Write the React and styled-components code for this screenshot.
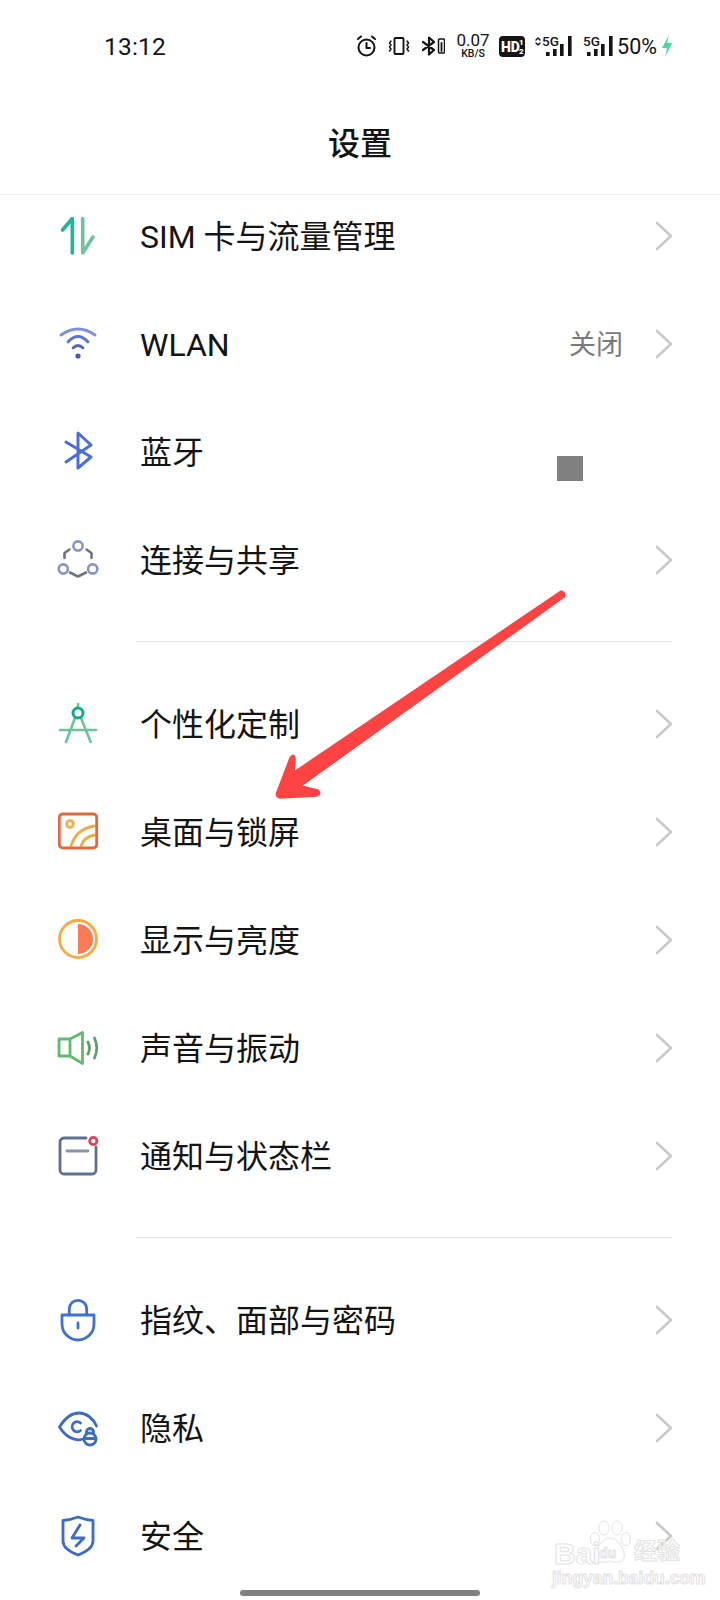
import React from 'react'
import styled, { createGlobalStyle } from 'styled-components'

const GlobalStyle = createGlobalStyle`
  html, body { margin: 0; padding: 0; background: #ffffff; }
  * { box-sizing: border-box; }
`

const CJK = `Roboto, "Noto Sans CJK SC", sans-serif`

const Page = styled.div`
  position: relative;
  width: 720px;
  height: 1600px;
  overflow: hidden;
  background: #ffffff;
  font-family: ${CJK};
  color: #141414;
`

const Header = styled.header`
  position: relative;
  z-index: 1;
  height: 195px;
  background: #ffffff;
  border-bottom: 1px solid #ececec;
`

const StatusBar = styled.div`
  display: flex;
  align-items: center;
  justify-content: space-between;
  height: 92px;
  padding: 0 47px 0 104px;
`

const Time = styled.div`
  font-family: Roboto, sans-serif;
  font-size: 24.5px;
  letter-spacing: 0.2px;
`

const StatusIcons = styled.div`
  display: flex;
  align-items: center;
`

const Speed = styled.div`
  display: flex;
  flex-direction: column;
  align-items: center;
  width: 32px;
  margin: 0 10px 0 12px;
  font-family: Roboto, sans-serif;
  line-height: 1;
`

const SpeedValue = styled.span`
  font-size: 17px;
`

const SpeedUnit = styled.span`
  font-size: 10.5px;
  font-weight: 500;
`

const Battery = styled.span`
  font-family: Roboto, sans-serif;
  font-size: 21.5px;
  margin: 0 4px;
`

const Title = styled.h1`
  margin: 0;
  height: 102px;
  padding-bottom: 4px;
  display: flex;
  align-items: center;
  justify-content: center;
  font-size: 32px;
  font-weight: 500;
`

const List = styled.main`
  margin-top: -13px;
`

const Row = styled.div`
  display: flex;
  align-items: center;
  height: 108px;
  padding: 0 47px 0 56px;
`

const IconBox = styled.svg`
  flex: none;
  width: 44px;
  height: 44px;
  fill: none;
  stroke-linecap: round;
  stroke-linejoin: round;
`

const Label = styled.span`
  flex: 1;
  margin-left: 40px;
  padding-top: 1px;
  font-size: 32px;
  line-height: 44px;
  white-space: nowrap;
`

const Value = styled.span`
  margin-right: 32px;
  padding-top: 2px;
  font-size: 27px;
  line-height: 40px;
  color: #7a7a7a;
`

const Chevron = styled.svg`
  flex: none;
  width: 18px;
  height: 30px;
  fill: none;
  stroke: #c9c9c9;
  stroke-width: 2.6;
  stroke-linecap: round;
  stroke-linejoin: round;
`

const Divider = styled.hr`
  margin: 27px 48px 28px 136px;
  border: 0;
  border-top: 1px solid #e4e4e4;
`

const Patch = styled.div`
  position: absolute;
  left: ${p => p.$x}px;
  top: 456px;
  width: ${p => p.$w}px;
  height: 25px;
  background: ${p => p.$color};
`

const Arrow = styled.svg`
  position: absolute;
  left: 0;
  top: 0;
  width: 720px;
  height: 1600px;
  z-index: 2;
  pointer-events: none;
`

const HomeBar = styled.div`
  position: absolute;
  left: 240px;
  top: 1590px;
  width: 240px;
  height: 6px;
  border-radius: 3px;
  background: #808080;
  z-index: 3;
`

const Watermark = styled.div`
  position: absolute;
  left: 552px;
  top: 1520px;
  width: 132px;
  height: 66px;
  z-index: 2;
  color: rgba(255, 255, 255, 0.75);
  -webkit-text-stroke: 1px #e2e2e2;
`

const MarkText = styled.span`
  position: absolute;
  left: ${p => p.$x}px;
  top: ${p => p.$y}px;
  font-family: "Liberation Sans", "Noto Sans CJK SC", sans-serif;
  font-size: ${p => p.$size}px;
  font-weight: 700;
  line-height: 1;
  white-space: nowrap;
`

const Paw = styled.svg`
  position: absolute;
  left: 36px;
  top: 0;
  width: 44px;
  height: 46px;
  fill: rgba(255, 255, 255, 0.6);
  stroke: #e2e2e2;
  stroke-width: 1;
`

const Next = () => (
  <Chevron viewBox="0 0 18 30">
    <path d="M2 2 L16 15 L2 28" />
  </Chevron>
)

const SimIcon = () => (
  <IconBox viewBox="0 0 44 44" strokeWidth="3.6">
    <path d="M16.3 39 V4.5 L6.5 16" stroke="#1fb598" />
    <path d="M26.7 4.5 V39 L37 23" stroke="#6fc29c" />
  </IconBox>
)

const WifiIcon = () => (
  <IconBox viewBox="0 0 44 44" strokeWidth="2.8">
    <path d="M5 13 Q22 1 39 13" stroke="#7c90dc" />
    <path d="M12 20 Q22 9 32 20" stroke="#5f74d1" />
    <path d="M17 26 Q22 21 27 26" stroke="#5163c6" />
    <circle cx="22" cy="34" r="2.6" fill="#4a55b8" />
  </IconBox>
)

const BluetoothIcon = () => (
  <IconBox viewBox="0 0 44 44" strokeWidth="3" stroke="#4a6fd8">
    <path d="M10 12 L35 27 L22 38 V3 L35 15 L10 32" />
  </IconBox>
)

const ShareIcon = () => (
  <IconBox viewBox="0 0 44 44" strokeWidth="2.6">
    <g stroke="#8795c2">
      <circle cx="22" cy="8" r="4.6" />
      <circle cx="7.3" cy="31" r="4.6" />
      <circle cx="36.7" cy="31" r="4.6" />
    </g>
    <g stroke="#6d7482">
      <path d="M8.5 20 V15 L13.5 11.5" />
      <path d="M35.5 20 V15 L30.5 11.5" />
      <path d="M14 34.5 L22 38.5 L30 34.5" />
    </g>
  </IconBox>
)

const CompassIcon = () => (
  <IconBox viewBox="0 0 44 44" strokeWidth="2.6">
    <path d="M22 2 V5" stroke="#6cc49c" />
    <path d="M19 16 L10 40 M25 16 L34.7 40 M4 28 H40" stroke="#6cc49c" />
    <circle cx="22" cy="11" r="5" stroke="#13a98f" strokeWidth="3" />
  </IconBox>
)

const WallpaperIcon = () => (
  <IconBox viewBox="0 0 44 44" strokeWidth="2.8">
    <circle cx="14" cy="14" r="3.4" stroke="#eeb050" />
    <path d="M15 36 Q20 19 38.5 16" stroke="#eeac48" />
    <path d="M25 36 Q28 27 38.5 25" stroke="#eeac48" />
    <rect x="3.3" y="4" width="37.4" height="34" rx="3.5" stroke="#e2683e" />
  </IconBox>
)

const BrightnessIcon = () => (
  <IconBox viewBox="0 0 44 44">
    <circle cx="22" cy="21" r="18.5" stroke="#f3ab42" strokeWidth="2.8" />
    <path d="M22 6 A15 15 0 0 1 22 36 Z" fill="#fb7b55" />
  </IconBox>
)

const SoundIcon = () => (
  <IconBox viewBox="0 0 44 44" strokeWidth="2.8">
    <path d="M3 13 H14 L26.5 6.5 V37.5 L14 30 H3 Z M14 13 V30" stroke="#62bb6a" />
    <path d="M32 16 Q35 22 32 28 M38.5 12 Q43 22 38.5 32" stroke="#5f9e72" />
  </IconBox>
)

const NoticeIcon = () => (
  <IconBox viewBox="0 0 44 44" strokeWidth="2.8">
    <path d="M30 4 H8 A4 4 0 0 0 4 8 V36 A4 4 0 0 0 8 40 H36 A4 4 0 0 0 40 36 V13" stroke="#5f6f92" />
    <path d="M11 17 H32" stroke="#8793b2" />
    <circle cx="37.3" cy="7" r="3.6" stroke="#e0405a" />
  </IconBox>
)

const LockIcon = () => (
  <IconBox viewBox="0 0 44 44" strokeWidth="2.8" stroke="#3f72d0">
    <path d="M13.3 17 V11 A8.7 8.7 0 0 1 30.7 11 V17" />
    <path d="M6 17 H38 V26 A16 16 0 0 1 6 26 Z" />
    <path d="M22 25 V30" />
  </IconBox>
)

const PrivacyIcon = () => (
  <IconBox viewBox="0 0 44 44" strokeWidth="2.8" stroke="#3d6cc4">
    <path d="M27 33 C18 36 9 30 3.5 21 C9 12 16 7 23 7 C30 7 37 12 40.5 20" />
    <path d="M24.5 17 A5 5 0 1 0 24.5 24.5" />
    <path d="M30.5 27 V26 A3.5 3.5 0 0 1 37.5 26 V27" />
    <circle cx="34" cy="33" r="6" fill="#ffffff" />
    <path d="M28 32.5 H40" />
  </IconBox>
)

const ShieldIcon = () => (
  <IconBox viewBox="0 0 44 44" strokeWidth="2.8" stroke="#3d6cc4">
    <path d="M22 3 C27 5 32 6 37 6.5 V27 C37 33 30 38 22 41 C14 38 7 33 7 27 V6.5 C12 6 17 5 22 3 Z" />
    <path d="M24 11 L16 24 H28 L20 32" />
  </IconBox>
)

const StatusSvg = styled.svg`
  flex: none;
  display: block;
  margin-left: ${p => p.$gap || 0}px;
  fill: none;
  stroke: #141414;
  stroke-linecap: round;
  stroke-linejoin: round;
`

const SvgLabel = styled.text`
  font-family: Roboto, sans-serif;
  fill: ${p => p.$fill || '#141414'};
  stroke: none;
  font-size: ${p => p.$size}px;
  font-weight: ${p => p.$weight || 500};
`

const Alarm = () => (
  <StatusSvg width="21" height="22" viewBox="0 0 21 22" strokeWidth="2">
    <circle cx="10.5" cy="12.5" r="8" />
    <path d="M10.5 8 V13 H14 M2 4 L5 1.5 M19 4 L16 1.5" />
  </StatusSvg>
)

const Vibrate = () => (
  <StatusSvg $gap="11" width="22" height="20" viewBox="0 0 22 20" strokeWidth="1.9">
    <rect x="6.5" y="2" width="9" height="16" rx="1" />
    <path d="M3 5 L1.5 7 L3 9 L1.5 11 L3 13 L1.5 15 M19 5 L20.5 7 L19 9 L20.5 11 L19 13 L20.5 15" strokeWidth="1.5" />
  </StatusSvg>
)

const BluetoothBattery = () => (
  <StatusSvg $gap="12" width="23" height="20" viewBox="0 0 23 20" strokeWidth="2.2">
    <path d="M1 6 L12 14 L7 18.5 V1.5 L12 6 L1 14" />
    <rect x="16.5" y="3" width="6" height="14" rx="1" strokeWidth="1.5" />
    <path d="M19.5 7 V15" strokeWidth="1.8" />
  </StatusSvg>
)

const HdBadge = () => (
  <StatusSvg width="26" height="21" viewBox="0 0 26 21">
    <rect x="0" y="0" width="26" height="21" rx="4" fill="#141414" stroke="none" />
    <SvgLabel x="2" y="15.5" $size="14" $weight="900" $fill="#ffffff">HD</SvgLabel>
    <SvgLabel x="20" y="8.5" $size="8" $weight="900" $fill="#ffffff">1</SvgLabel>
    <SvgLabel x="20" y="18" $size="8" $weight="900" $fill="#ffffff">2</SvgLabel>
  </StatusSvg>
)

const Signal = ({ arrows, gap }) => (
  <StatusSvg $gap={gap} width={arrows ? 38 : 30} height="28" viewBox={arrows ? '-8 -3 38 28' : '0 -3 30 28'}>
    {arrows && <path d="M-6 5 L-4 3 L-2 5 M-6 8 L-4 10 L-2 8" strokeWidth="1.4" />}
    <SvgLabel x="0" y="11" $size="13.5" $weight="500">5G</SvgLabel>
    <g stroke="none" fill="#141414">
      <rect x="4" y="17" width="3.6" height="4" />
      <rect x="11" y="14" width="3.6" height="7" />
      <rect x="18" y="9" width="3.6" height="12" />
      <rect x="26" y="1" width="3.6" height="20" />
    </g>
  </StatusSvg>
)

const Bolt = () => (
  <StatusSvg width="12" height="24" viewBox="0 0 12 24">
    <path d="M8 1 L1 14 H6 L4 23 L11 9 H6 Z" fill="#44dba0" stroke="none" />
  </StatusSvg>
)

const groups = [
  [
    { icon: <SimIcon />, label: 'SIM 卡与流量管理' },
    { icon: <WifiIcon />, label: 'WLAN', value: '关闭' },
    { icon: <BluetoothIcon />, label: '蓝牙', noArrow: true },
    { icon: <ShareIcon />, label: '连接与共享' },
  ],
  [
    { icon: <CompassIcon />, label: '个性化定制' },
    { icon: <WallpaperIcon />, label: '桌面与锁屏' },
    { icon: <BrightnessIcon />, label: '显示与亮度' },
    { icon: <SoundIcon />, label: '声音与振动' },
    { icon: <NoticeIcon />, label: '通知与状态栏' },
  ],
  [
    { icon: <LockIcon />, label: '指纹、面部与密码' },
    { icon: <PrivacyIcon />, label: '隐私' },
    { icon: <ShieldIcon />, label: '安全' },
  ],
]

export default function App() {
  return (
    <Page>
      <GlobalStyle />
      <Header>
        <StatusBar>
          <Time>13:12</Time>
          <StatusIcons>
            <Alarm />
            <Vibrate />
            <BluetoothBattery />
            <Speed>
              <SpeedValue>0.07</SpeedValue>
              <SpeedUnit>KB/S</SpeedUnit>
            </Speed>
            <HdBadge />
            <Signal arrows gap="9" />
            <Signal gap="11" />
            <Battery>50%</Battery>
            <Bolt />
          </StatusIcons>
        </StatusBar>
        <Title>设置</Title>
      </Header>

      <List>
        {groups.map((group, i) => (
          <React.Fragment key={i}>
            {i > 0 && <Divider />}
            {group.map(item => (
              <Row key={item.label}>
                {item.icon}
                <Label>{item.label}</Label>
                {item.value && <Value>{item.value}</Value>}
                {!item.noArrow && <Next />}
              </Row>
            ))}
          </React.Fragment>
        ))}
      </List>

      <Patch $x={405} $w={26} $color="#fefefe" />
      <Patch $x={481} $w={70} $color="#fefefe" />
      <Patch $x={557} $w={26} $color="#808080" />

      <Arrow viewBox="0 0 720 1600">
        <path
          d="M561 591 Q566 592 564 597 L301 786 L318 790 Q322 795 316 796 L280 798 Q275 797 277 792 L290 758 Q294 752 295 759 L294 772 Z"
          fill="#ff4343"
          stroke="#ff4343"
          strokeWidth="1.5"
          strokeLinejoin="round"
        />
      </Arrow>

      <Watermark>
        <Paw viewBox="0 0 44 46">
          <ellipse cx="7" cy="19" rx="4.5" ry="6.5" />
          <ellipse cx="16" cy="8" rx="5" ry="7" />
          <ellipse cx="29" cy="8" rx="5" ry="7" />
          <ellipse cx="38" cy="19" rx="4.5" ry="6.5" />
          <path d="M22 18 C30 18 38 30 36 38 C34 44 26 42 22 41 C18 42 10 44 8 38 C6 30 14 18 22 18 Z" />
        </Paw>
        <MarkText $x={2} $y={19} $size={30}>Bai</MarkText>
        <MarkText $x={47} $y={26} $size={14}>du</MarkText>
        <MarkText $x={82} $y={20} $size={23}>经验</MarkText>
        <MarkText $x={0} $y={50} $size={17.5}>jingyan.baidu.com</MarkText>
      </Watermark>

      <HomeBar />
    </Page>
  )
}
